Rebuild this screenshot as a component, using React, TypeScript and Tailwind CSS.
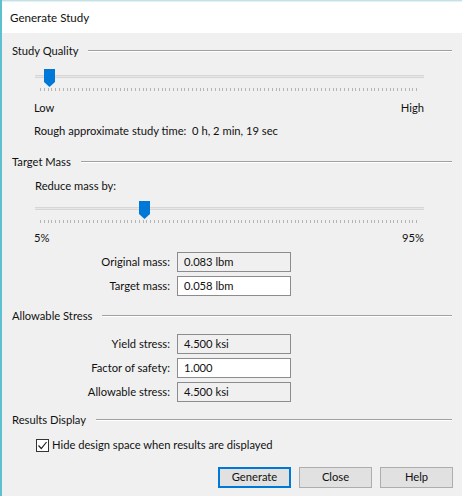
const font = { fontFamily: 'Lato, "Liberation Sans", sans-serif' };

function SectionHeader({ title }: { title: string }) {
  return (
    <div className="flex items-center h-4 pl-[10px] pr-[10px]">
      <span className="leading-4 whitespace-nowrap">{title}</span>
      <div className="flex-1 ml-[10px] border-t border-[#a0a0a0] border-b-white border-b" />
    </div>
  );
}

function Slider({ pos }: { pos: number }) {
  return (
    <div className="relative ml-[33px] w-[389px] h-[23px]">
      <div className="absolute left-0 right-0 top-[6px] h-[3px] bg-[#e7e7e7] border-y border-[#d6d6d6]" />
      <div className="absolute left-[5px] right-[5px] top-[19px] h-[3px] bg-[repeating-linear-gradient(90deg,#b4b4b4_0px,#b4b4b4_1px,transparent_1px,transparent_3.8px)]" />
      <svg
        className="absolute top-0"
        style={{ left: pos }}
        width="11"
        height="18"
        viewBox="0 0 11 18"
      >
        <path d="M0 0 H11 V13 L5.5 18 L0 13 Z" fill="#0078d7" />
      </svg>
    </div>
  );
}

function Field({ label, value, editable }: { label: string; value: string; editable?: boolean }) {
  return (
    <div className="flex items-center h-[20px]">
      <span className="w-[175px] text-right pr-[7px] whitespace-nowrap">{label}</span>
      <div
        className={`w-[114px] h-[20px] border border-[#8c8c8c] pl-[6px] flex items-center ${
          editable ? "bg-white" : "bg-[#f0f0f0]"
        }`}
      >
        {value}
      </div>
    </div>
  );
}

function Button({ label, primary }: { label: string; primary?: boolean }) {
  return (
    <button
      className={`w-[73px] h-[21px] bg-[#e1e1e1] flex items-center justify-center ${
        primary ? "border-2 border-[#0078d7]" : "border border-[#adadad]"
      }`}
    >
      {label}
    </button>
  );
}

export default function App() {
  return (
    <div
      className="w-[462px] h-[496px] overflow-hidden bg-[#f0f0f0] border-l-2 border-[#5cc0cf] text-[11.2px] text-[#111] flex flex-col"
      style={font}
    >
      <div className="h-[2px] bg-[#c6e2e6] border-b border-[#e2f1f3]" />
      <div className="h-[31px] bg-white flex items-center pl-[8px] text-[11.6px]">Generate Study</div>

      <div className="pt-[10px] flex flex-col">
        {/* Study Quality */}
        <SectionHeader title="Study Quality" />
        <div className="mt-[10px]">
          <Slider pos={9} />
        </div>
        <div className="mt-[8px] flex justify-between ml-[32px] w-[390px] leading-4">
          <span>Low</span>
          <span>High</span>
        </div>
        <div className="mt-[7px] ml-[32px] leading-4 whitespace-pre">
          Rough approximate study time:  0 h, 2 min, 19 sec
        </div>

        {/* Target Mass */}
        <div className="mt-[15px]">
          <SectionHeader title="Target Mass" />
        </div>
        <div className="mt-[8px] ml-[33px] leading-4">Reduce mass by:</div>
        <div className="mt-[7px]">
          <Slider pos={104} />
        </div>
        <div className="mt-[6px] flex justify-between ml-[32px] w-[390px] leading-4">
          <span>5%</span>
          <span>95%</span>
        </div>
        <div className="mt-[6px] flex flex-col gap-[4px]">
          <Field label="Original mass:" value="0.083 lbm" />
          <Field label="Target mass:" value="0.058 lbm" editable />
        </div>

        {/* Allowable Stress */}
        <div className="mt-[12px]">
          <SectionHeader title="Allowable Stress" />
        </div>
        <div className="mt-[10px] flex flex-col gap-[4px]">
          <Field label="Yield stress:" value="4.500 ksi" />
          <Field label="Factor of safety:" value="1.000" editable />
          <Field label="Allowable stress:" value="4.500 ksi" />
        </div>

        {/* Results Display */}
        <div className="mt-[10px]">
          <SectionHeader title="Results Display" />
        </div>
        <label className="mt-[9px] ml-[34px] flex items-center gap-[3px] leading-4">
          <span className="w-[13px] h-[13px] border border-[#333] bg-white flex items-center justify-center">
            <svg width="11" height="11" viewBox="0 0 11 11">
              <path d="M1.5 5.5 L4.3 8.5 L9.5 2" fill="none" stroke="#222" strokeWidth="1.2" />
            </svg>
          </span>
          Hide design space when results are displayed
        </label>

        <div className="mt-[14px] flex justify-end gap-[8px] pr-[9px]">
          <Button label="Generate" primary />
          <Button label="Close" />
          <Button label="Help" />
        </div>
      </div>
    </div>
  );
}
